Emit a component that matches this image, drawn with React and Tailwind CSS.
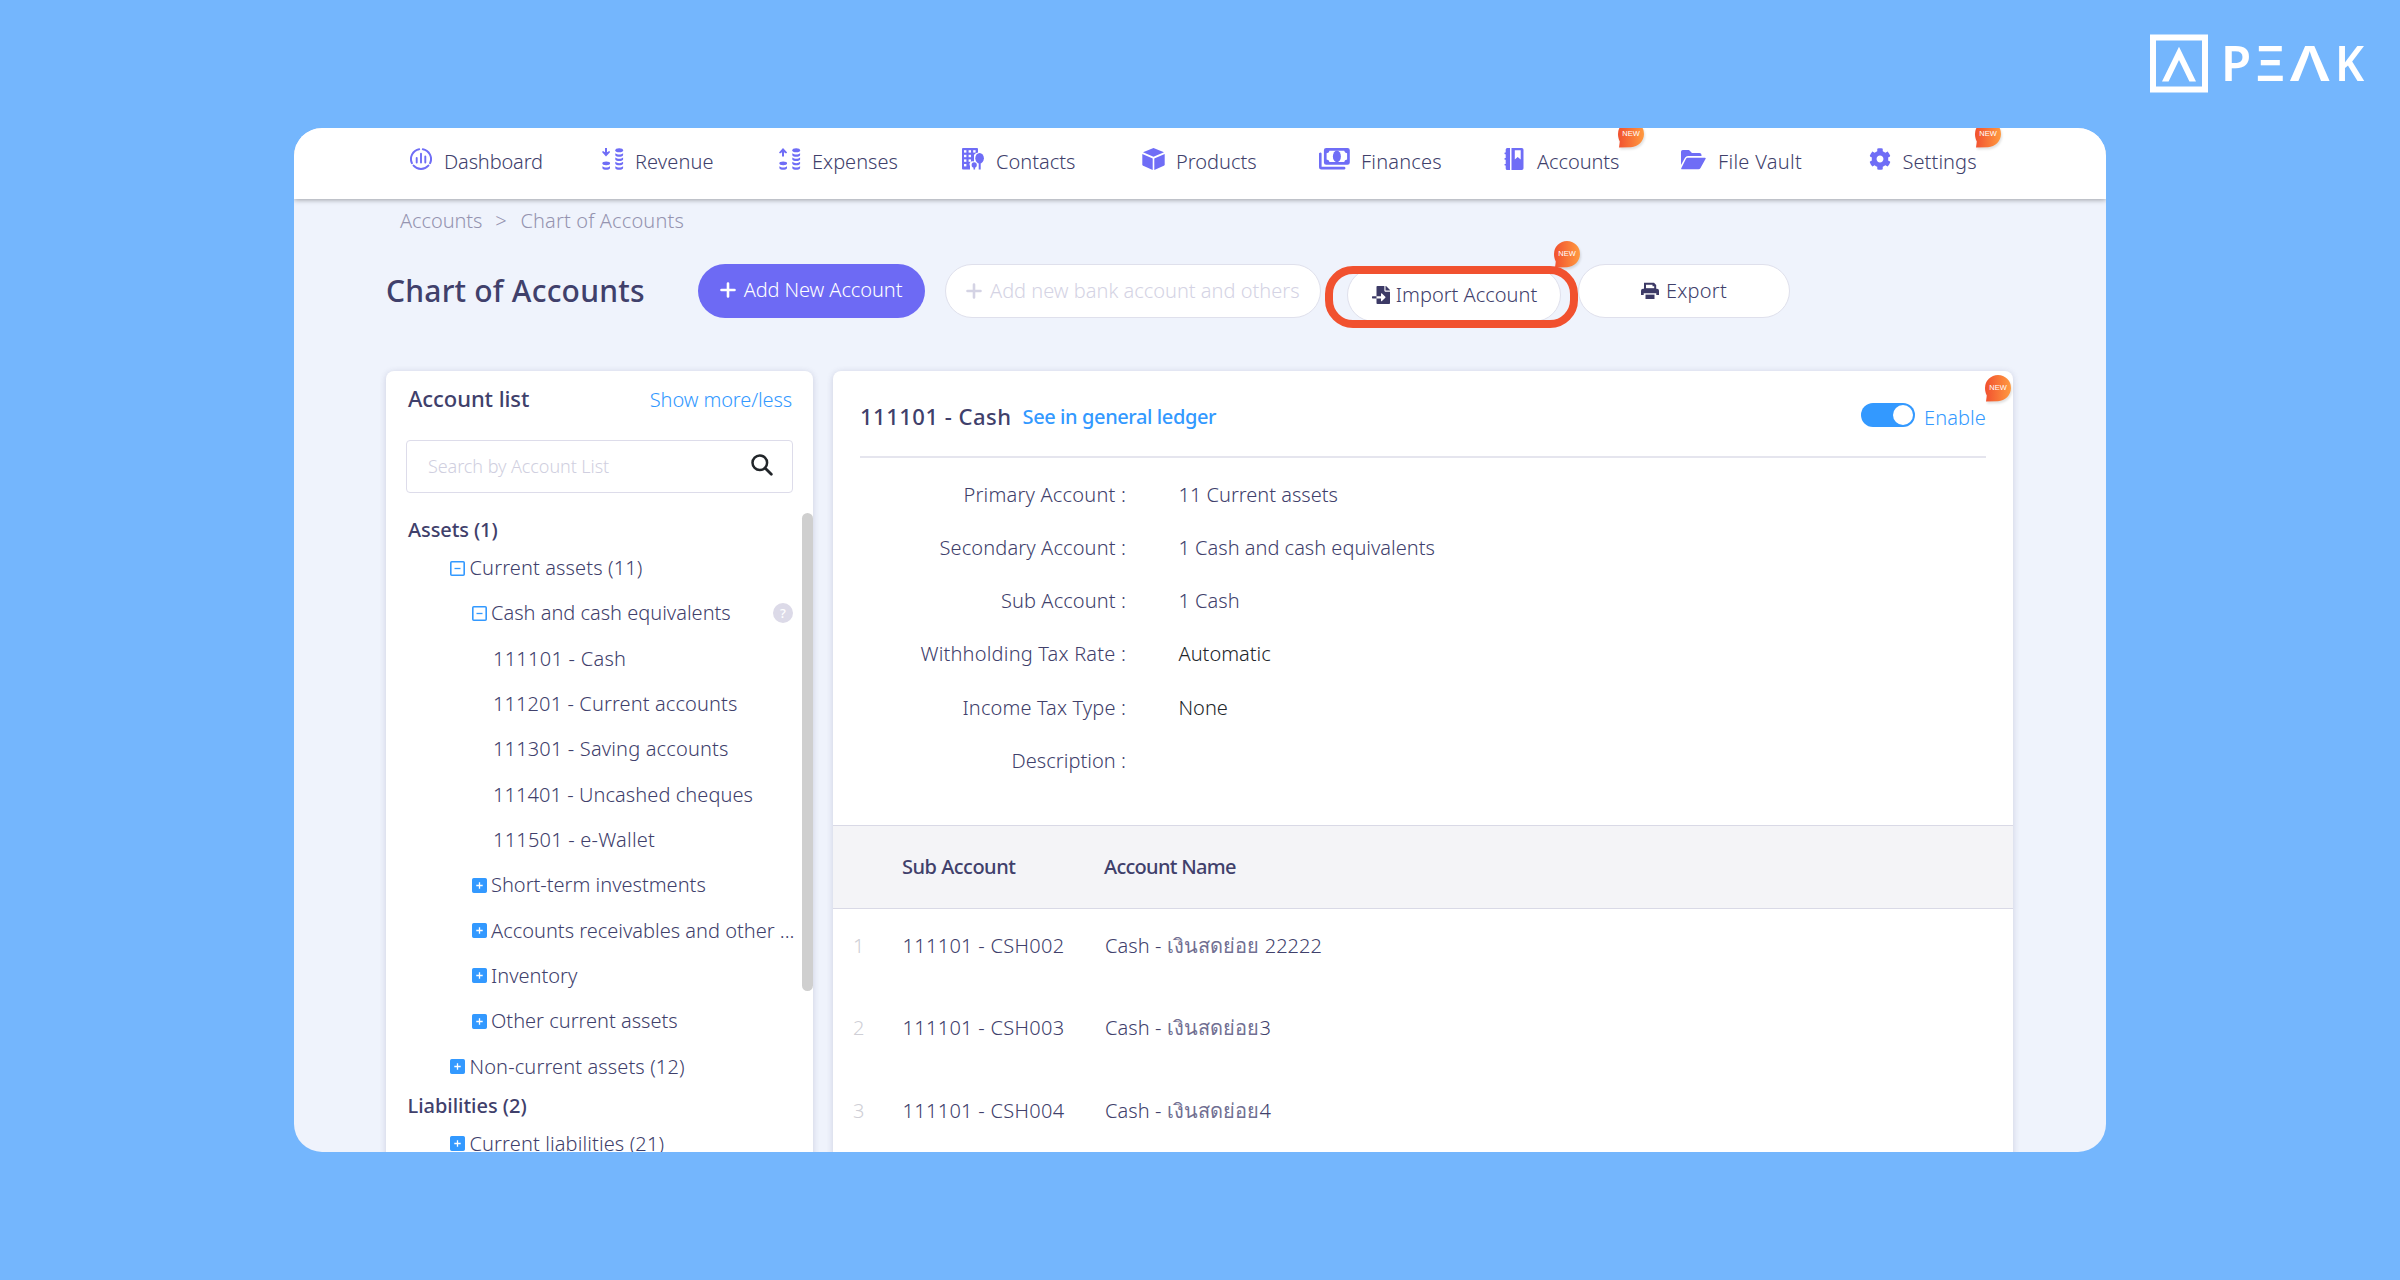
import React, { useState } from "react";
import { FaCog, FaFileImport } from "react-icons/fa";

function DashboardIcon() {
  return (
    <svg width="22" height="22" viewBox="0 0 22 22" fill="none" stroke="currentColor" strokeLinecap="round">
      <path
        d="M9.2 1.2A9.9 9.9 0 0 0 1.9 15.1M3.6 17.6A9.9 9.9 0 0 0 18.4 17.6M20.1 15.1A9.9 9.9 0 0 0 12.8 1.2"
        strokeWidth="2"
      />
      <path d="M6.7 10V14.6M11 5.8V14.6M15.3 8.4V14.6" strokeWidth="1.9" />
    </svg>
  );
}

function CoinsIcon({ up }) {
  return (
    <svg width="22" height="22" viewBox="0 0 22 22" fill="currentColor">
      {up ? (
        <path d="M4 0L8.2 4.4L7 5.5L5 4.2V8.4H3V4.2L1 5.5L0 4.4Z" />
      ) : (
        <path d="M3 0H5V4.3L7.2 3L8.2 4.1L4 8.4L0 4.1L1 3L3 4.3Z" />
      )}
      <ellipse cx="4.2" cy="15.3" rx="3.9" ry="1.9" />
      <path d="M0.4 18.2C2.5 20 6 20 8 18.2V20.2C7 22.2 1.4 22.2 0.4 20.2Z" />
      <ellipse cx="17.2" cy="2.2" rx="3.9" ry="2" />
      <path d="M13.3 5.2C15.5 7 19 7 21.1 5.2V7.2C20 9.2 14.4 9.2 13.3 7.2Z" />
      <path d="M13.3 9.5C15.5 11.3 19 11.3 21.1 9.5V11.5C20 13.5 14.4 13.5 13.3 11.5Z" />
      <path d="M13.3 13.8C15.5 15.6 19 15.6 21.1 13.8V15.8C20 17.8 14.4 17.8 13.3 15.8Z" />
      <path d="M13.3 18.2C15.5 20 19 20 21.1 18.2V20.2C20 22.2 14.4 22.2 13.3 20.2Z" />
    </svg>
  );
}

function ContactsIcon() {
  return (
    <svg width="22" height="22" viewBox="0 0 22 22">
      <path d="M1 0H15A1 1 0 0 1 16 1V21.5H1A1 1 0 0 1 0 20.5V1A1 1 0 0 1 1 0Z" fill="currentColor" />
      <g fill="#fff">
        <rect x="2" y="2.2" width="2.4" height="2.4" />
        <rect x="6.6" y="2.2" width="2.4" height="2.4" />
        <rect x="11.2" y="2.2" width="2.4" height="2.4" />
        <rect x="2" y="6.8" width="2.4" height="2.4" />
        <rect x="6.6" y="6.8" width="2.4" height="2.4" />
        <rect x="2" y="11.4" width="2.4" height="2.4" />
        <rect x="6.6" y="11.4" width="2.4" height="2.4" />
        <rect x="2" y="16" width="2.4" height="2.4" />
        <path d="M12 7C14 4 21 3 22 7V22H8V18C6.5 15 9 12.5 12 13.5Z" />
      </g>
      <g fill="currentColor">
        <ellipse cx="17.6" cy="10.2" rx="4.3" ry="5.2" />
        <rect x="16.7" y="14" width="2" height="7.5" />
        <ellipse cx="12.2" cy="17" rx="2.6" ry="2.8" />
        <rect x="11.5" y="18" width="1.6" height="3.5" />
      </g>
    </svg>
  );
}

function ProductsIcon() {
  return (
    <svg width="23" height="22" viewBox="0 0 23 22" fill="currentColor">
      <path d="M11.5 0L22 4.3L11.5 8.8L1 4.3Z" />
      <path d="M0.3 6L10.7 10.4V22L1.2 17.8Q0.3 17.3 0.3 16.3Z" />
      <path d="M22.7 6L12.3 10.4V22L21.8 17.8Q22.7 17.3 22.7 16.3Z" />
    </svg>
  );
}

function FinancesIcon() {
  return (
    <svg width="31" height="22" viewBox="0 0 31 22" fill="currentColor">
      <path
        fillRule="evenodd"
        d="M7.2 0H28.5A2.3 2.3 0 0 1 30.8 2.3V14.5A2.3 2.3 0 0 1 28.5 16.8H7.2A2.3 2.3 0 0 1 4.9 14.5V2.3A2.3 2.3 0 0 1 7.2 0ZM10.5 2.8Q10.2 5 7.6 5.3V11.5Q10.2 11.8 10.5 14H25.2Q25.5 11.8 28.1 11.5V5.3Q25.5 5 25.2 2.8Z"
      />
      <ellipse cx="17.9" cy="8.4" rx="4" ry="5.8" />
      <path d="M0 6.5A1.3 1.3 0 0 1 2.6 5.5V18.7H25A1.4 1.4 0 0 1 25 21.6H2.5A2.5 2.5 0 0 1 0 19.1Z" />
    </svg>
  );
}

function AccountsIcon() {
  return (
    <svg width="20" height="22" viewBox="0 0 20 22" fill="currentColor">
      <path d="M3.2 0H6V22H3.2Q1.7 22 1.7 20.5V17.6H0.8Q0 16.7 0.8 15.9H1.7V11.8H0.8Q0 11 0.8 10.1H1.7V6.2H0.8Q0 5.3 0.8 4.5H1.7V1.5Q1.7 0 3.2 0Z" />
      <path fillRule="evenodd" d="M7.5 0H17.8Q19.5 0 19.5 1.7V20.3Q19.5 22 17.8 22H7.5ZM10.8 2.2V11.5L13.7 9L16.7 11.5V2.2Z" />
    </svg>
  );
}

function FolderIcon() {
  return (
    <svg width="25" height="20" viewBox="0 0 25 20" fill="currentColor" className="mt-[2px]">
      <path d="M1.8 0H8L11 3H18.5Q20.5 3 20.5 5V6H7Q5 6 4 7.8L0 15V1.8Q0 0 1.8 0Z" />
      <path d="M6.5 7.7H24Q25.3 7.7 24.5 9L19.5 18Q18.8 19.2 17.5 19.2H1Q-0.2 19.2 0.4 18L5 8.7Q5.5 7.7 6.5 7.7Z" />
    </svg>
  );
}

function PrintIcon() {
  return (
    <svg width="18" height="18" viewBox="0 0 18 18" fill="#3c3a66">
      <path fillRule="evenodd" d="M3 0.8H13L15.2 3V7.5H3ZM5 2.8V6.2H13.2V4.2H11.5V2.8Z" />
      <path d="M2 6.8H16Q18 6.8 18 8.8V13H15.3V11.2H2.7V13H0V8.8Q0 6.8 2 6.8Z" />
      <rect x="4.5" y="12.6" width="9" height="4.4" />
    </svg>
  );
}

function NewBadge() {
  return (
    <span className="relative flex h-[26px] w-[26px] items-center justify-center">
      <svg width="26" height="27" viewBox="0 0 26 27" className="absolute left-0 top-0 overflow-visible drop-shadow-[1px_2px_1px_rgba(0,0,0,0.12)]">
        <defs>
          <linearGradient id="newBadge">
            <stop offset="0" stopColor="#f1502f" />
            <stop offset="1" stopColor="#ff9a40" />
          </linearGradient>
        </defs>
        <path d="M13 0A13 13 0 0 1 26 13C26 20 20 26 13 26.2L1 26.5L1.8 20.5C0.6 18 0 15.5 0 13A13 13 0 0 1 13 0Z" fill="url(#newBadge)" />
      </svg>
      <span className="relative font-['Liberation_Sans',sans-serif] text-[7.5px] font-normal leading-none text-white">NEW</span>
    </span>
  );
}

function PlusIcon() {
  return (
    <svg width="16" height="16" viewBox="0 0 16 16" stroke="currentColor" strokeWidth="2.6" strokeLinecap="round">
      <path d="M8 1.5V14.5M1.5 8H14.5" />
    </svg>
  );
}

const navItems = [
  { label: "Dashboard", icon: <DashboardIcon />, item: "w-[192px]", slot: "w-[34px]", text: "tracking-[-0.15px]" },
  { label: "Revenue", icon: <CoinsIcon />, item: "w-[177px]", slot: "w-[33px]", text: "tracking-[0.1px]" },
  { label: "Expenses", icon: <CoinsIcon up />, item: "w-[183px]", slot: "w-[33px]", text: "" },
  { label: "Contacts", icon: <ContactsIcon />, item: "w-[180px]", slot: "w-[34px]", text: "" },
  { label: "Products", icon: <ProductsIcon />, item: "w-[177px]", slot: "w-[34px]", text: "" },
  { label: "Finances", icon: <FinancesIcon />, item: "w-[185px]", slot: "w-[42px]", text: "tracking-[0.2px]" },
  { label: "Accounts", icon: <AccountsIcon />, item: "w-[177px]", slot: "w-[33px]", text: "tracking-[-0.09px]", badge: "left-[114px]" },
  { label: "File Vault", icon: <FolderIcon />, item: "w-[188px]", slot: "w-[37px]", text: "tracking-[0.3px]" },
  { label: "Settings", icon: <FaCog size={22} />, item: "w-[130px]", slot: "w-[33.5px]", text: "tracking-[0.08px]", badge: "left-[106px]" },
];

const tree = [
  { label: "Current assets (11)", level: 1, open: true, row: "h-[40.6px] pb-[4px]", text: "tracking-[0.13px]" },
  { label: "Cash and cash equivalents", level: 2, open: true, help: true },
  { label: "111101 - Cash", level: 3, text: "tracking-[0.26px]" },
  { label: "111201 - Current accounts", level: 3, text: "tracking-[0.11px]" },
  { label: "111301 - Saving accounts", level: 3, text: "tracking-[0.16px]" },
  { label: "111401 - Uncashed cheques", level: 3, text: "tracking-[0.07px]" },
  { label: "111501 - e-Wallet", level: 3, text: "tracking-[0.22px]" },
  { label: "Short-term investments", level: 2 },
  { label: "Accounts receivables and other ...", level: 2 },
  { label: "Inventory", level: 2 },
  { label: "Other current assets", level: 2 },
  { label: "Non-current assets (12)", level: 1, text: "tracking-[0.12px]" },
];

const indent = { 1: "pl-[64px]", 2: "pl-[85.5px]", 3: "pl-[107px]" };

const fields = [
  { label: "Primary Account :", value: "11 Current assets", color: "", text: "tracking-[0.2px]" },
  { label: "Secondary Account :", value: "1 Cash and cash equivalents", color: "", text: "tracking-[0.13px]" },
  { label: "Sub Account :", value: "1 Cash", color: "", text: "tracking-[0.1px]" },
  { label: "Withholding Tax Rate :", value: "Automatic", color: "text-[#212529]", text: "tracking-[0.2px]" },
  { label: "Income Tax Type :", value: "None", color: "text-[#212529]", text: "tracking-[0.13px]" },
  { label: "Description :", value: "", color: "", text: "tracking-[0.05px]" },
];

const subAccounts = [
  { code: "111101 - CSH002", thai: "เงินสดย่อย", suffix: " 22222" },
  { code: "111101 - CSH003", thai: "เงินสดย่อย", suffix: "3" },
  { code: "111101 - CSH004", thai: "เงินสดย่อย", suffix: "4" },
];

function ToggleBox({ open }) {
  return (
    <svg width="15" height="15" viewBox="0 0 15 15" fill="none" className="shrink-0">
      <rect x="0.8" y="0.8" width="13.4" height="13.4" rx="1" fill={open ? "#fff" : "#3399ff"} stroke="#3399ff" strokeWidth="1.6" />
      <path d={open ? "M4.5 7.5H10.5" : "M4.3 7.5H10.7M7.5 4.3V10.7"} stroke={open ? "#3399ff" : "#fff"} strokeWidth="1.3" />
    </svg>
  );
}

function TreeRow({ label, level, open, help, row = "h-[45.33px]", text = "" }) {
  return (
    <div className={`flex items-center pr-5 ${indent[level]} ${row}`}>
      {level < 3 && <ToggleBox open={open} />}
      <span className={`whitespace-nowrap ${level < 3 ? "ml-[4.5px]" : ""} ${text}`}>{label}</span>
      {help && (
        <span className="ml-auto flex h-5 w-5 items-center justify-center rounded-full bg-[#dcdae8] text-[13px] font-medium leading-none text-white">
          ?
        </span>
      )}
    </div>
  );
}

export default function App() {
  const [enabled, setEnabled] = useState(true);
  const [search, setSearch] = useState("");

  return (
    <div className="relative h-[1280px] w-[2400px] overflow-hidden bg-[#74b6fd] px-[294px] pt-[128px] font-['Noto_Sans',sans-serif] text-[20px] font-light leading-[28px] text-[#40406b]">
      {/* Brand */}
      <div className="absolute left-[2150px] top-[34px] flex text-white">
        <svg width="58" height="59" viewBox="0 0 58 59" fill="none" stroke="#fff">
          <rect x="3" y="3.5" width="52" height="52" strokeWidth="6" />
          <path d="M12 47.5H18.6L29 26L39.4 47.5H46L29 12.8Z" fill="#fff" stroke="none" />
        </svg>
        <div className="-mt-[2px] ml-[13px] flex text-[49px] font-semibold leading-[60px]">
          <span className="w-[34px]">P</span>
          <span className="w-[35px]">Ξ</span>
          <span className="w-[45px] origin-left scale-x-125">Λ</span>
          <span className="origin-left scale-x-92">K</span>
        </div>
      </div>

      <div className="flex h-[1024px] w-[1812px] flex-col overflow-hidden rounded-[28px] bg-[#eff3fc]">
        {/* Top navigation */}
        <nav className="z-10 flex h-[71px] shrink-0 bg-white pl-[116px] shadow-[0_1px_5px_rgba(0,0,0,0.35)]">
          {navItems.map((n) => (
            <div key={n.label} className={`relative flex h-[67px] items-center ${n.item}`}>
              <span className={`-mt-[5px] flex shrink-0 text-[#6f6df6] ${n.slot}`}>{n.icon}</span>
              <span className={`whitespace-nowrap ${n.text}`}>{n.label}</span>
              {n.badge && (
                <span className={`absolute -top-[7px] ${n.badge}`}>
                  <NewBadge />
                </span>
              )}
            </div>
          ))}
        </nav>

        <div className="flex h-[65px] shrink-0 items-start gap-[13px] pl-[106px] pt-[8px] tracking-[0.14px] text-[#9594b0]">
          <span className="tracking-[-0.09px]">Accounts</span>
          <span>&gt;</span>
          <span className="ml-[0.5px]">Chart of Accounts</span>
        </div>

        {/* Page title and actions */}
        <div className="relative flex h-[54px] shrink-0 items-center pl-[92px]">
          <h1 className="w-[311.5px] whitespace-nowrap text-[30px] font-medium tracking-[0.22px]">Chart of Accounts</h1>
          <button className="flex h-[54px] w-[227px] items-center justify-center gap-[8px] rounded-full bg-[#6d6af4] pb-[2px] text-white">
            <PlusIcon />
            <span className="tracking-[-0.09px]">Add New Account</span>
          </button>
          <button className="ml-[20.5px] flex h-[54px] w-[375.5px] items-center justify-center gap-[8px] rounded-full border border-[#dfe0ec] bg-white pb-[1px] text-[#d4d3e4]">
            <PlusIcon />
            Add new bank account and others
          </button>
          <button className="ml-[26.5px] flex h-[54px] w-[214px] translate-y-[4px] items-center justify-center gap-[6px] rounded-full border border-[#dfe0ec] bg-white pl-[1px]">
            <FaFileImport size={18} className="text-[#3c3a66]" />
            Import Account
          </button>
          <button className="ml-[17px] flex h-[54px] w-[212px] items-center justify-center gap-[7px] rounded-full border border-[#dfe0ec] bg-white pb-[1px] tracking-[0.24px]">
            <PrintIcon />
            Export
          </button>
          <span className="absolute -top-[23px] left-[1260px]">
            <NewBadge />
          </span>
          <div className="absolute left-[1030.5px] top-[2px] h-[62px] w-[253.5px] rounded-[28px] border-8 border-[#f1512f]" />
        </div>

        <div className="mt-[53px] flex flex-1 gap-[20px] pl-[92px]">
          {/* Account list */}
          <aside className="relative h-[800px] w-[427px] rounded-t-[8px] bg-white shadow-[0_1px_6px_rgba(60,60,110,0.2)]">
            <div className="flex h-[54px] items-center justify-between pl-[22px] pr-[21px]">
              <h2 className="text-[22px] font-medium tracking-[-0.07px]">Account list</h2>
              <a className="mt-[3px] tracking-[-0.11px] text-[#3399ff]">Show more/less</a>
            </div>
            <div className="ml-[20px] mt-[15px] flex h-[53px] w-[387px] items-center rounded-[4px] border border-[#dddcea] pl-[21px] pr-[19px]">
              <input
                value={search}
                onChange={(e) => setSearch(e.target.value)}
                placeholder="Search by Account List"
                className="-mt-[1px] w-full text-[18px] tracking-[-0.07px] outline-none placeholder:text-[#d0cfe0]"
              />
              <svg width="22" height="22" viewBox="0 0 22 22" fill="none" stroke="#212529" strokeLinecap="round" className="-mt-[3px] shrink-0">
                <circle cx="8.8" cy="8.8" r="7.3" strokeWidth="2.5" />
                <path d="M14.5 14.5L20.3 20.3" strokeWidth="2.8" />
              </svg>
            </div>
            <div className="mt-[17px]">
              <div className="flex h-[40px] items-center pl-[22px] font-medium tracking-[-0.09px]">Assets (1)</div>
              {tree.map((t) => (
                <TreeRow key={t.label} {...t} />
              ))}
              <div className="flex h-[34px] items-center pl-[21.5px] font-medium tracking-[-0.02px]">Liabilities (2)</div>
              <TreeRow label="Current liabilities (21)" level={1} row="h-[41px]" text="tracking-[0.12px]" />
            </div>
            <div className="absolute right-0 top-[142px] h-[478px] w-[11px] rounded-full bg-[#cfcfcf]" />
          </aside>

          {/* Account detail */}
          <section className="relative h-[800px] w-[1180px] rounded-t-[8px] bg-white shadow-[0_1px_6px_rgba(60,60,110,0.2)]">
            <div className="mx-[27px] flex h-[87px] items-center border-b-2 border-[#e5e5ee] pt-[4px]">
              <h3 className="text-[22px] font-medium tracking-[0.5px]">111101 - Cash</h3>
              <a className="ml-[11px] mt-[2px] font-medium tracking-[-0.4px] text-[#3399ff]">See in general ledger</a>
              <button
                onClick={() => setEnabled(!enabled)}
                className={`-mt-[2px] ml-auto flex h-[24px] w-[54px] items-center rounded-full px-[2px] ${
                  enabled ? "justify-end bg-[#3399ff]" : "bg-gray-300"
                }`}
              >
                <span className="h-[20px] w-[20px] rounded-full bg-white" />
              </button>
              <span className="ml-[9px] mt-[5px] tracking-[0.1px] text-[#3399ff]">Enable</span>
            </div>
            <span className="absolute left-[1152px] top-[4px]">
              <NewBadge />
            </span>

            <div className="h-[367px] pl-[27px] pt-[10px]">
              {fields.map((f) => (
                <div key={f.label} className="flex h-[53.27px] items-center">
                  <span className={`w-[266px] text-right ${f.text}`}>{f.label}</span>
                  <span className={`ml-[52.5px] ${f.color}`}>{f.value}</span>
                </div>
              ))}
            </div>

            <div className="flex h-[84px] items-center border-y border-[#d9d9e6] bg-[#f4f4f7] pb-[1px] pl-[69px] font-medium">
              <span className="w-[202px] tracking-[-0.5px]">Sub Account</span>
              <span className="tracking-[-0.72px]">Account Name</span>
            </div>
            {subAccounts.map((s, i) => (
              <div key={s.code} className="flex h-[82.3px] items-center pb-[8px] pl-[20px]">
                <span className="w-[49.5px] text-[#cfcfd6]">{i + 1}</span>
                <span className="w-[202.5px] tracking-[0.3px]">{s.code}</span>
                <span className="whitespace-pre tracking-[0.07px]">
                  Cash - <span className="text-[#716f92]">{s.thai}</span>
                  {s.suffix}
                </span>
              </div>
            ))}
          </section>
        </div>
      </div>
    </div>
  );
}
